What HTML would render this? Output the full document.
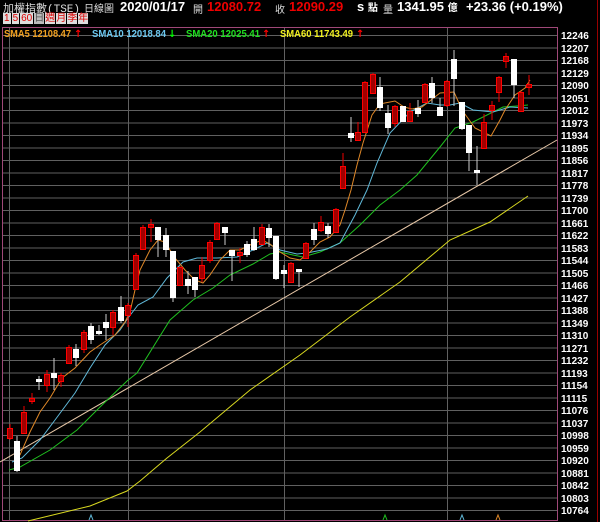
<!DOCTYPE html>
<html><head><meta charset="utf-8"><style>
body{margin:0;background:#000;width:600px;height:522px;overflow:hidden;position:relative;font-family:"Liberation Sans","Noto Sans CJK TC",sans-serif}
.t{position:absolute;white-space:nowrap}
</style></head><body>
<div class="t" style="left:3px;top:0px;font-size:11px;color:#ddd;font-family:'Liberation Mono','Noto Sans CJK TC',monospace">加權指數(TSE)</div>
<div class="t" style="left:84px;top:0px;font-size:10px;color:#ddd">日線圖</div>
<div class="t" style="left:120px;top:-1px;font-size:13px;color:#fff;font-weight:bold">2020/01/17</div>
<div class="t" style="left:193px;top:1px;font-size:10px;color:#ddd">開</div>
<div class="t" style="left:207px;top:-1px;font-size:13px;color:#e00;font-weight:bold">12080.72</div>
<div class="t" style="left:275px;top:1px;font-size:10px;color:#ddd">收</div>
<div class="t" style="left:289px;top:-1px;font-size:13px;color:#e00;font-weight:bold">12090.29</div>
<div class="t" style="left:357px;top:-1px;font-size:13px;color:#fff;font-weight:bold">s <span style="font-size:10px">點</span></div>
<div class="t" style="left:383px;top:1px;font-size:10px;color:#ddd">量</div>
<div class="t" style="left:397px;top:-1px;font-size:13px;color:#fff;font-weight:bold">1341.95 <span style="font-size:10px">億</span></div>
<div class="t" style="left:466px;top:-1px;font-size:13px;color:#fff;font-weight:bold">+23.36 (+0.19%)</div>
<div class="t" style="left:3px;top:13px;height:11px;font-size:10px;line-height:11px;color:#d00;display:flex;gap:1px">
<span style="background:#ddd;padding:0 1px">1</span><span style="background:#ddd;padding:0 1px">5</span><span style="background:#ddd;padding:0 1px">60</span><span style="background:#bbb;color:#555">日</span><span style="background:#ddd">週</span><span style="background:#ddd">月</span><span style="background:#ddd">季</span><span style="background:#ddd">年</span></div>
<svg width="600" height="522" style="position:absolute;left:0;top:0">
<g stroke="#606060" stroke-width="1">
<line x1="3" x2="557" y1="35.5" y2="35.5"/><line x1="3" x2="557" y1="48" y2="48"/><line x1="3" x2="557" y1="60.5" y2="60.5"/><line x1="3" x2="557" y1="73" y2="73"/><line x1="3" x2="557" y1="85.5" y2="85.5"/><line x1="3" x2="557" y1="98" y2="98"/><line x1="3" x2="557" y1="110.5" y2="110.5"/><line x1="3" x2="557" y1="123" y2="123"/><line x1="3" x2="557" y1="135.5" y2="135.5"/><line x1="3" x2="557" y1="148" y2="148"/><line x1="3" x2="557" y1="160.5" y2="160.5"/><line x1="3" x2="557" y1="173" y2="173"/><line x1="3" x2="557" y1="185.5" y2="185.5"/><line x1="3" x2="557" y1="198" y2="198"/><line x1="3" x2="557" y1="210.5" y2="210.5"/><line x1="3" x2="557" y1="223" y2="223"/><line x1="3" x2="557" y1="235.5" y2="235.5"/><line x1="3" x2="557" y1="248" y2="248"/><line x1="3" x2="557" y1="260.5" y2="260.5"/><line x1="3" x2="557" y1="273" y2="273"/><line x1="3" x2="557" y1="285.5" y2="285.5"/><line x1="3" x2="557" y1="298" y2="298"/><line x1="3" x2="557" y1="310.5" y2="310.5"/><line x1="3" x2="557" y1="323" y2="323"/><line x1="3" x2="557" y1="335.5" y2="335.5"/><line x1="3" x2="557" y1="348" y2="348"/><line x1="3" x2="557" y1="360.5" y2="360.5"/><line x1="3" x2="557" y1="373" y2="373"/><line x1="3" x2="557" y1="385.5" y2="385.5"/><line x1="3" x2="557" y1="398" y2="398"/><line x1="3" x2="557" y1="410.5" y2="410.5"/><line x1="3" x2="557" y1="423" y2="423"/><line x1="3" x2="557" y1="435.5" y2="435.5"/><line x1="3" x2="557" y1="448" y2="448"/><line x1="3" x2="557" y1="460.5" y2="460.5"/><line x1="3" x2="557" y1="473" y2="473"/><line x1="3" x2="557" y1="485.5" y2="485.5"/><line x1="3" x2="557" y1="498" y2="498"/><line x1="3" x2="557" y1="510.5" y2="510.5"/>
<line x1="9.5" x2="9.5" y1="28" y2="520"/><line x1="128.5" x2="128.5" y1="28" y2="520"/><line x1="284.5" x2="284.5" y1="28" y2="520"/><line x1="447.5" x2="447.5" y1="28" y2="520"/>
</g>
<rect x="2.5" y="27.5" width="555" height="493" fill="none" stroke="#a04878" stroke-width="1"/>
<line x1="597.5" x2="597.5" y1="0" y2="522" stroke="#900" stroke-width="1"/>
<g font-family="Liberation Sans,sans-serif" font-size="10" font-weight="bold" fill="#fff">
<text x="561" y="39">12246</text><text x="561" y="52">12207</text><text x="561" y="64">12168</text><text x="561" y="77">12129</text><text x="561" y="89">12090</text><text x="561" y="102">12051</text><text x="561" y="114">12012</text><text x="561" y="127">11973</text><text x="561" y="139">11934</text><text x="561" y="152">11895</text><text x="561" y="164">11856</text><text x="561" y="177">11817</text><text x="561" y="189">11778</text><text x="561" y="202">11739</text><text x="561" y="214">11700</text><text x="561" y="227">11661</text><text x="561" y="239">11622</text><text x="561" y="252">11583</text><text x="561" y="264">11544</text><text x="561" y="277">11505</text><text x="561" y="289">11466</text><text x="561" y="302">11427</text><text x="561" y="314">11388</text><text x="561" y="327">11349</text><text x="561" y="339">11310</text><text x="561" y="352">11271</text><text x="561" y="364">11232</text><text x="561" y="377">11193</text><text x="561" y="389">11154</text><text x="561" y="402">11115</text><text x="561" y="414">11076</text><text x="561" y="427">11037</text><text x="561" y="439">10998</text><text x="561" y="452">10959</text><text x="561" y="464">10920</text><text x="561" y="477">10881</text><text x="561" y="489">10842</text><text x="561" y="502">10803</text><text x="561" y="514">10764</text>
</g>
<g font-family="Liberation Sans,sans-serif" font-size="10" font-weight="bold">
<text x="4" y="37" fill="#f0a020" textLength="67" lengthAdjust="spacingAndGlyphs">SMA5 12108.47</text>
<text x="92" y="37" fill="#6cc8f0" textLength="74" lengthAdjust="spacingAndGlyphs">SMA10 12018.84</text>
<text x="186" y="37" fill="#20e020" textLength="74" lengthAdjust="spacingAndGlyphs">SMA20 12025.41</text>
<text x="280" y="37" fill="#f0f020" textLength="73" lengthAdjust="spacingAndGlyphs">SMA60 11743.49</text>
</g>
<g font-family="DejaVu Sans,sans-serif" font-size="10" font-weight="bold">
<text x="74" y="37" fill="#f00">↑</text>
<text x="168" y="37" fill="#0f0">↓</text>
<text x="262" y="37" fill="#f00">↑</text>
<text x="356" y="37" fill="#f00">↑</text>
</g>
<line x1="0" y1="462" x2="557" y2="140" stroke="#e8c8a8" stroke-width="1"/>
<polyline fill="none" stroke="#d8d820" stroke-width="1" points="28,521 90,506 127,491 140,481 167,458 200,432 250,390 300,355 350,317 400,282 450,240 490,222 528,196"/>
<polyline fill="none" stroke="#20c020" stroke-width="1" points="9,470 20,467 50,450 77,430 100,407 127,381 137,373 170,320 193,300 213,288 230,275 253,264 270,254 280,252 293,255 303,257 320,252 340,243 360,225 380,205 400,190 417,175 440,147 455,128 473,122 503,107 517,106 528,105"/>
<polyline fill="none" stroke="#60b8d8" stroke-width="1" points="12,462 22,458 40,440 55,420 75,393 90,368 105,345 120,330 128,318 138,305 153,297 167,278 183,262 197,258 217,258 237,257 253,250 267,243 280,250 297,254 307,253 327,249 340,243 355,215 367,190 377,163 390,133 410,112 427,103 440,105 450,105 460,103 473,110 493,112 510,107 528,108"/>
<polyline fill="none" stroke="#e08828" stroke-width="1" points="14,457 20,455 30,432 40,412 50,398 62,378 75,368 90,352 100,345 115,335 125,322 130,312 135,290 140,270 150,250 158,240 165,242 175,258 185,270 195,280 203,283 210,275 220,260 230,250 240,250 250,245 262,240 270,244 280,252 290,258 300,260 310,252 320,242 330,237 340,225 345,210 351,190 357,165 363,143 372,115 380,104 395,101 404,107 412,109 422,107 440,93 454,92 462,110 475,128 491,136 500,120 505,110 515,95 525,88 530,80"/>
<g id="c"></g>
<g fill="none" stroke-width="1">
<path d="M89,520 L91,515 L93,520" stroke="#60b8d8"/>
<path d="M383,520 L385,515 L387,520" stroke="#20c020"/>
<path d="M460,520 L462,515 L464,520" stroke="#60b8d8"/>
<path d="M496,520 L498,515 L500,520" stroke="#e08828"/>
</g>
</svg>
<script>
var d=[[7,428,438,424,440,'r'],[14,441,470,436,472,'w'],[21,412,433,406,434,'r'],[29,398,401,393,404,'r'],[36,379,381,376,390,'w'],[44,374,385,370,392,'r'],[51,373,377,358,390,'w'],[58,375,381,373,387,'r'],[66,347,363,345,364,'r'],[73,349,357,344,366,'w'],[81,332,349,330,353,'r'],[88,326,339,323,344,'w'],[96,331,333,325,335,'w'],[103,322,327,314,340,'w'],[110,312,327,310,335,'r'],[118,307,320,296,323,'w'],[125,305,315,303,327,'r'],[133,255,289,253,290,'r'],[140,227,249,225,250,'r'],[148,224,227,219,242,'r'],[155,227,239,227,257,'w'],[163,235,249,228,257,'w'],[170,251,297,251,302,'w'],[177,267,285,266,286,'r'],[185,279,285,271,294,'w'],[192,277,289,277,297,'w'],[199,265,278,257,282,'r'],[207,242,260,240,263,'r'],[214,223,239,222,240,'r'],[222,227,232,227,245,'w'],[229,250,255,250,281,'w'],[237,252,255,248,263,'r'],[244,244,254,241,257,'w'],[251,239,249,227,251,'w'],[259,227,244,224,245,'r'],[266,228,237,224,247,'w'],[273,236,278,236,280,'w'],[281,270,273,265,288,'w'],[288,263,282,262,283,'r'],[296,269,271,269,287,'w'],[303,243,258,242,259,'r'],[311,229,239,223,245,'w'],[318,222,230,216,232,'r'],[325,226,233,223,238,'w'],[333,209,232,208,233,'r'],[340,166,188,153,189,'r'],[348,133,137,117,142,'w'],[355,132,140,122,141,'r'],[362,82,132,81,133,'r'],[370,74,93,73,94,'r'],[377,87,107,77,111,'w'],[385,113,127,105,134,'w'],[392,106,123,105,127,'r'],[400,106,121,106,121,'w'],[407,111,121,103,122,'r'],[415,108,113,100,117,'w'],[422,84,102,83,103,'r'],[429,83,97,77,103,'w'],[437,107,115,98,115,'w'],[444,81,105,80,107,'r'],[451,59,78,50,106,'w'],[459,102,128,102,130,'w'],[466,125,152,125,171,'w'],[474,170,172,146,185,'w'],[481,122,148,114,149,'r'],[489,105,110,101,120,'r'],[496,77,92,76,102,'r'],[503,56,61,53,68,'r'],[511,59,84,59,98,'w'],[518,92,111,91,112,'r'],[526,84,87,75,95,'r']];
var s='';d.forEach(function(c){var x=c[0],cx=x+3;var red=c[5]=='r';
s+='<line x1="'+cx+'" x2="'+cx+'" y1="'+c[3]+'" y2="'+c[4]+'" stroke="'+(red?'#e00':'#ccc')+'"/>';
var h=Math.max(c[2]-c[1],1);
s+='<rect x="'+(x+0.5)+'" y="'+(c[1]+0.5)+'" width="5" height="'+h+'" fill="'+(red?'#a00000':'#fff')+'" stroke="'+(red?'#f00':'#fff')+'"/>';});
document.getElementById('c').innerHTML=s;
</script>
</body></html>
